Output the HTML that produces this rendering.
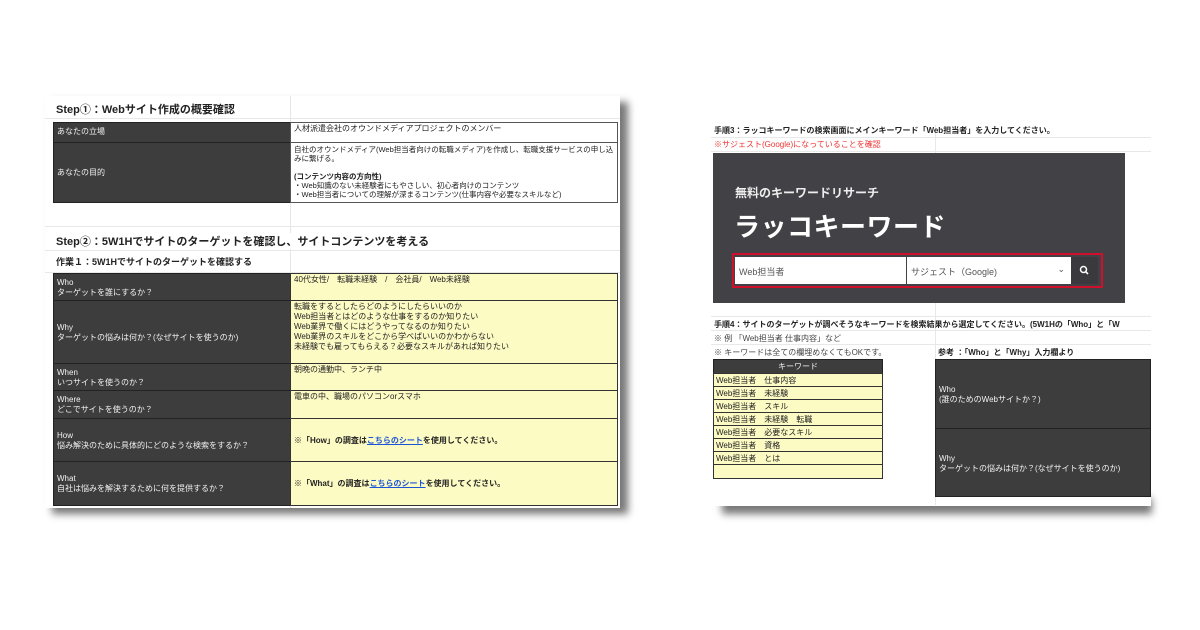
<!DOCTYPE html>
<html><head><meta charset="utf-8"><style>
*{margin:0;padding:0;box-sizing:border-box}
body{width:1200px;height:630px;background:#fff;position:relative;overflow:hidden;font-family:"Liberation Sans","Noto Sans CJK JP",sans-serif;color:#222}
.a{position:absolute}
.d{background:#3d3d3d;color:#f2f2f2;border:1px solid #222}
.y{background:#fdfbc4;border:1px solid #333}
.s{font-size:8px;line-height:10px}
.b{font-weight:bold}
.h{position:absolute;height:1px;background:#e8e8e8}
</style></head><body>
<!-- left sheet -->
<div class="a" style="left:52px;top:102px;width:576px;height:412px;background:#777;filter:blur(4px)"></div>
<div class="a" style="left:45px;top:96px;width:575px;height:412px;background:#fff"></div>
<div class="a" style="left:290px;top:96px;width:1px;height:412px;background:#e6e6e6"></div>
<div class="h" style="left:45px;top:118px;width:575px"></div>
<div class="h" style="left:45px;top:226px;width:575px"></div>
<div class="h" style="left:45px;top:250px;width:575px"></div>
<div class="h" style="left:45px;top:272px;width:575px"></div>
<div class="a b" style="left:56px;top:101px;font-size:11px">Step①：Webサイト作成の概要確認</div>
<div class="a d s" style="left:53px;top:122px;width:238px;height:21px;padding:4px 3px">あなたの立場</div>
<div class="a s" style="left:290px;top:122px;width:328px;height:21px;border:1px solid #555;padding:1px 3px">人材派遣会社のオウンドメディアプロジェクトのメンバー</div>
<div class="a d s" style="left:53px;top:142px;width:238px;height:61px;padding:25px 3px">あなたの目的</div>
<div class="a" style="left:290px;top:142px;width:328px;height:61px;border:1px solid #555;padding:2px 3px;font-size:7.5px;line-height:9px">自社のオウンドメディア(Web担当者向けの転職メディア)を作成し、転職支援サービスの申し込みに繋げる。<br><br><b>(コンテンツ内容の方向性)</b><br>・Web知識のない未経験者にもやさしい、初心者向けのコンテンツ<br>・Web担当者についての理解が深まるコンテンツ(仕事内容や必要なスキルなど)</div>
<div class="a b" style="left:56px;top:233px;font-size:11px;background:#fff;padding-right:2px">Step②：5W1Hでサイトのターゲットを確認し、サイトコンテンツを考える</div>
<div class="a b" style="left:56px;top:255px;font-size:9px">作業１：5W1Hでサイトのターゲットを確認する</div>
<div class="a d s" style="left:53px;top:273px;width:238px;height:28px;padding:4px 3px">Who<br>ターゲットを誰にするか？</div>
<div class="a y s" style="left:290px;top:273px;width:328px;height:28px;padding:1px 3px">40代女性/　転職未経験　/　会社員/　Web未経験</div>
<div class="a d s" style="left:53px;top:300px;width:238px;height:64px;padding:22px 3px">Why<br>ターゲットの悩みは何か？(なぜサイトを使うのか)</div>
<div class="a y s" style="left:290px;top:300px;width:328px;height:64px;padding:1px 3px">転職をするとしたらどのようにしたらいいのか<br>Web担当者とはどのような仕事をするのか知りたい<br>Web業界で働くにはどうやってなるのか知りたい<br>Web業界のスキルをどこから学べばいいのかわからない<br>未経験でも雇ってもらえる？必要なスキルがあれば知りたい</div>
<div class="a d s" style="left:53px;top:363px;width:238px;height:28px;padding:4px 3px">When<br>いつサイトを使うのか？</div>
<div class="a y s" style="left:290px;top:363px;width:328px;height:28px;padding:1px 3px">朝晩の通勤中、ランチ中</div>
<div class="a d s" style="left:53px;top:390px;width:238px;height:29px;padding:4px 3px">Where<br>どこでサイトを使うのか？</div>
<div class="a y s" style="left:290px;top:390px;width:328px;height:29px;padding:1px 3px">電車の中、職場のパソコンorスマホ</div>
<div class="a d s" style="left:53px;top:418px;width:238px;height:44px;padding:12px 3px">How<br>悩み解決のために具体的にどのような検索をするか？</div>
<div class="a y s b" style="left:290px;top:418px;width:328px;height:44px;padding:17px 3px">※「How」の調査は<span style="color:#1a55d6;text-decoration:underline">こちらのシート</span>を使用してください。</div>
<div class="a d s" style="left:53px;top:461px;width:238px;height:45px;padding:12px 3px">What<br>自社は悩みを解決するために何を提供するか？</div>
<div class="a y s b" style="left:290px;top:461px;width:328px;height:45px;padding:17px 3px">※「What」の調査は<span style="color:#1a55d6;text-decoration:underline">こちらのシート</span>を使用してください。</div>

<!-- right sheet -->
<div class="a" style="left:722px;top:498px;width:430px;height:16px;background:#777;filter:blur(4px)"></div>
<div class="a" style="left:711px;top:123px;width:440px;height:383px;background:#fff"></div>
<div class="h" style="left:711px;top:137px;width:440px"></div>
<div class="h" style="left:711px;top:151px;width:440px"></div>
<div class="h" style="left:711px;top:316px;width:440px"></div>
<div class="h" style="left:711px;top:330px;width:440px"></div>
<div class="h" style="left:711px;top:344px;width:440px"></div>
<div class="a" style="left:935px;top:125px;width:1px;height:380px;background:#e8e8e8"></div>
<div class="a b s" style="left:714px;top:126px;font-size:8px">手順3：ラッコキーワードの検索画面にメインキーワード「Web担当者」を入力してください。</div>
<div class="a s" style="left:714px;top:140px;color:#e33">※サジェスト(Google)になっていることを確認</div>
<div class="a" style="left:713px;top:153px;width:412px;height:150px;background:#414146"></div>
<div class="a b" style="left:735px;top:184px;font-size:12px;color:#eee">無料のキーワードリサーチ</div>
<div class="a b" style="left:734px;top:207px;font-size:26px;color:#fff;letter-spacing:0.5px">ラッコキーワード</div>
<div class="a" style="left:732px;top:253px;width:371px;height:35px;border:2px solid #d0102a;background:#414146"></div>
<div class="a" style="left:735px;top:257px;width:171px;height:27px;background:#fff;font-size:9px;color:#555;padding:8px 4px">Web担当者</div>
<div class="a" style="left:907px;top:257px;width:164px;height:27px;background:#fff;font-size:9px;color:#555;padding:8px 4px">サジェスト（Google)<span style="position:absolute;right:6px;top:7px">⌄</span></div>
<div class="a" style="left:1071px;top:257px;width:27px;height:27px;background:#3a3a3e"><svg width="27" height="27"><circle cx="12.5" cy="12.5" r="3" stroke="#fff" stroke-width="1.5" fill="none"/><line x1="14.7" y1="14.7" x2="17" y2="17" stroke="#fff" stroke-width="1.6"/></svg></div>
<div class="a b s" style="left:714px;top:320px;white-space:nowrap">手順4：サイトのターゲットが調べそうなキーワードを検索結果から選定してください。(5W1Hの「Who」と「W</div>
<div class="a s" style="left:714px;top:334px;color:#444">※ 例 「Web担当者 仕事内容」など</div>
<div class="a s" style="left:714px;top:348px;color:#444">※ キーワードは全ての欄埋めなくてもOKです。</div>
<div class="a b s" style="left:938px;top:348px">参考 ：「Who」と「Why」入力欄より</div>
<div class="a d s" style="left:713px;top:359px;width:170px;height:15px;text-align:center;padding-top:2px">キーワード</div>
<div class="a" style="left:713px;top:373px;width:170px;font-size:8px">
<div class="y" style="height:14px;padding:1px 2px">Web担当者　仕事内容</div>
<div class="y" style="height:14px;padding:1px 2px;margin-top:-1px">Web担当者　未経験</div>
<div class="y" style="height:14px;padding:1px 2px;margin-top:-1px">Web担当者　スキル</div>
<div class="y" style="height:14px;padding:1px 2px;margin-top:-1px">Web担当者　未経験　転職</div>
<div class="y" style="height:14px;padding:1px 2px;margin-top:-1px">Web担当者　必要なスキル</div>
<div class="y" style="height:14px;padding:1px 2px;margin-top:-1px">Web担当者　資格</div>
<div class="y" style="height:14px;padding:1px 2px;margin-top:-1px">Web担当者　とは</div>
<div class="y" style="height:15px;margin-top:-1px"></div>
</div>
<div class="a d s" style="left:935px;top:359px;width:216px;height:70px;padding:25px 3px">Who<br>(誰のためのWebサイトか？)</div>
<div class="a d s" style="left:935px;top:428px;width:216px;height:69px;padding:25px 3px">Why<br>ターゲットの悩みは何か？(なぜサイトを使うのか)</div>
</body></html>
